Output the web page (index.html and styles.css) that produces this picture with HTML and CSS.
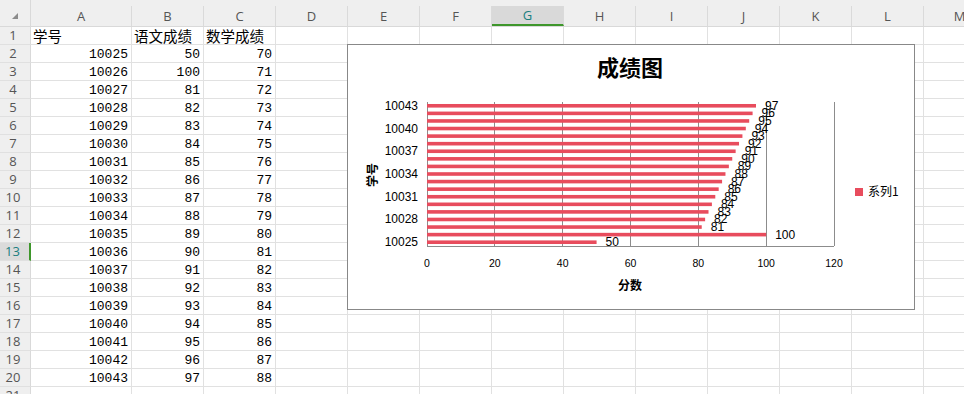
FILE: index.html
```html
<!DOCTYPE html>
<html lang="zh-CN">
<head>
    <meta charset="UTF-8">
    <meta name="viewport" content="width=device-width, initial-scale=1.0">
    <title>成绩表</title>
    <link rel="stylesheet" href="styles.css">
</head>
<body>
    <div class="sheet" id="sheet">
        <div class="chart">
            <svg id="chartSvg" class="chart-svg" width="566" height="264" viewBox="0 0 566 264"></svg>
        </div>
    </div>

    <script>
        const sheet = document.getElementById('sheet');
        const chartSvg = document.getElementById('chartSvg');

        const letters = ['A', 'B', 'C', 'D', 'E', 'F', 'G', 'H', 'I', 'J', 'K', 'L', 'M'];
        const yuwen = [50, 100, 81, 82, 83, 84, 85, 86, 87, 88, 89, 90, 91, 92, 93, 94, 95, 96, 97];

        function cell(cls, text) {
            const div = document.createElement('div');
            div.className = cls;
            if (text !== undefined) div.textContent = text;
            sheet.appendChild(div);
            return div;
        }

        // Column header row
        cell('corner').innerHTML = '<span class="corner-mark"></span>';
        letters.forEach(l => {
            const head = cell('col-head' + (l === 'G' ? ' active' : ''));
            head.innerHTML = '<span class="col-label">' + l + '</span>';
        });

        // Data rows
        for (let r = 1; r <= 21; r++) {
            cell('row-head' + (r === 13 ? ' active' : ''), r);
            for (let c = 0; c < letters.length; c++) {
                let text = '';
                let cls = 'cell';
                if (r === 1 && c < 3) {
                    text = ['学号', '语文成绩', '数学成绩'][c];
                    cls += ' text';
                } else if (r >= 2 && r <= 20 && c < 3) {
                    text = [10023 + r, yuwen[r - 2], 68 + r][c];
                    cls += ' num';
                }
                cell(cls, text);
            }
        }

        // Bar chart
        const plot = { left: 79, right: 486, top: 57, bottom: 201 };
        const scale = (plot.right - plot.left) / 120;
        const step = (plot.bottom - plot.top) / yuwen.length;
        let svg = '';

        svg += '<text class="chart-title" x="282" y="31" text-anchor="middle">成绩图</text>';

        for (let v = 0; v <= 120; v += 20) {
            const x = plot.left + v * scale;
            svg += '<line class="grid" x1="' + x + '" y1="' + plot.top + '" x2="' + x + '" y2="' + plot.bottom + '"/>';
            svg += '<text class="tick-x" x="' + x + '" y="222" text-anchor="middle">' + v + '</text>';
        }
        svg += '<line class="grid" x1="' + plot.left + '" y1="' + plot.bottom + '" x2="' + plot.right + '" y2="' + plot.bottom + '"/>';

        yuwen.forEach((v, i) => {
            const y = plot.bottom - (i + 0.5) * step;
            const w = v * scale;
            svg += '<rect class="bar" x="' + plot.left + '" y="' + (y - 1.8) + '" width="' + w + '" height="3.6"/>';
            svg += '<text class="data-label" x="' + (plot.left + w + 9) + '" y="' + (y + 4) + '">' + v + '</text>';
            if (i % 3 === 0) {
                svg += '<text class="tick-y" x="70" y="' + (y + 4) + '" text-anchor="end">' + (10025 + i) + '</text>';
            }
        });

        svg += '<text class="axis-title" transform="translate(29 130) rotate(-90)" text-anchor="middle">学号</text>';
        svg += '<text class="axis-title" x="282" y="245" text-anchor="middle">分数</text>';

        svg += '<rect class="bar" x="507" y="143" width="8" height="8"/>';
        svg += '<text class="legend" x="520" y="151">系列1</text>';

        chartSvg.innerHTML = svg;
    </script>
</body>
</html>
```

FILE: styles.css
```css
body {
    margin: 0;
    padding: 0;
    width: 964px;
    height: 394px;
    overflow: hidden;
    background-color: #ffffff;
    font-family: "Liberation Sans", "Noto Sans CJK SC", sans-serif;
}

.sheet {
    position: relative;
    display: grid;
    grid-template-columns: 31px 101px repeat(12, 72px);
    grid-template-rows: 27px repeat(21, 18px);
    width: 964px;
    overflow: hidden;
}

.corner {
    background-color: #efefef;
    border-right: 1px solid #d9d9d9;
    border-bottom: 1px solid #d9d9d9;
    box-sizing: border-box;
    position: relative;
}

.corner-mark {
    position: absolute;
    left: 12px;
    top: 13px;
    width: 0;
    height: 0;
    border-left: 6px solid transparent;
    border-bottom: 6px solid #8c8c8c;
}

.col-head {
    background-color: #efefef;
    border-bottom: 1px solid #d9d9d9;
    padding-top: 6px;
    box-sizing: border-box;
}

.col-label {
    display: block;
    height: 20px;
    line-height: 20px;
    text-align: center;
    font-family: "Open Sans", "Noto Sans", sans-serif;
    font-size: 13px;
    color: #555555;
    border-right: 1px solid #dadada;
    box-sizing: border-box;
}

.col-head.active .col-label {
    background-color: #d9d9d9;
    border-bottom: 2px solid #3e962b;
    line-height: 19px;
    color: #1a7f80;
}

.row-head {
    background-color: #efefef;
    border-right: 1px solid #d9d9d9;
    border-bottom: 1px solid #e0e0e0;
    box-sizing: border-box;
    padding-right: 4px;
    text-align: center;
    font-family: "Open Sans", "Noto Sans", sans-serif;
    font-size: 13px;
    line-height: 17px;
    color: #555555;
}

.row-head.active {
    background-color: #dbdbdb;
    border-right: 2px solid #3e962b;
    color: #1a7f80;
}

.cell {
    border-right: 1px solid #e1e1e1;
    border-bottom: 1px solid #e1e1e1;
    box-sizing: border-box;
    line-height: 17px;
    color: #000000;
    white-space: nowrap;
}

.cell.text {
    padding-left: 2px;
    font-family: "Noto Sans CJK SC", sans-serif;
    font-size: 14.5px;
    line-height: 18px;
}

.cell.num {
    padding-right: 3px;
    text-align: right;
    font-family: "Liberation Mono", monospace;
    font-size: 13px;
    line-height: 19px;
}

/* chart floats over the cells */
.chart {
    position: absolute;
    left: 347px;
    top: 44px;
    width: 568px;
    height: 266px;
    background-color: #ffffff;
    border: 1px solid #888888;
    box-sizing: border-box;
}

.chart-svg {
    display: block;
}

.chart-title {
    font-family: "Noto Sans CJK SC", sans-serif;
    font-size: 22px;
    font-weight: bold;
    fill: #000000;
}

.grid {
    stroke: #8c8c8c;
    stroke-width: 1;
    shape-rendering: crispEdges;
}

.bar {
    fill: #e84c5d;
}

.tick-x {
    font-family: "Liberation Sans", sans-serif;
    font-size: 10.5px;
    fill: #000000;
}

.tick-y,
.data-label {
    font-family: "Liberation Sans", sans-serif;
    font-size: 12px;
    fill: #000000;
}

.axis-title {
    font-family: "Noto Sans CJK SC", sans-serif;
    font-size: 12px;
    font-weight: bold;
    fill: #000000;
}

.legend {
    font-family: "Noto Sans CJK SC", sans-serif;
    font-size: 12px;
    fill: #000000;
}
```
